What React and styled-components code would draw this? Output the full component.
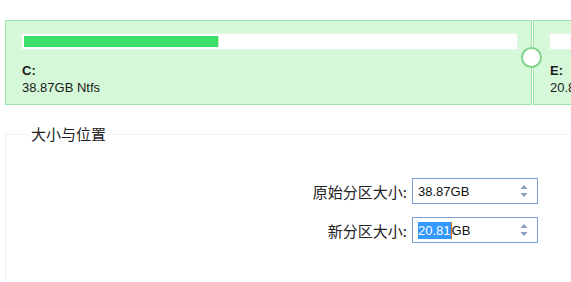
import styled, { createGlobalStyle } from "styled-components";

const GlobalStyle = createGlobalStyle`
  html, body {
    margin: 0;
    padding: 0;
    background: #ffffff;
    overflow: hidden;
  }
  body {
    font-family: "Liberation Sans", "Noto Sans CJK SC", sans-serif;
    font-size: 13px;
    color: #1a1a1a;
  }
`;

const Page = styled.div`
  width: 571px;
  height: 282px;
  overflow: hidden;
`;

const PartitionStrip = styled.div`
  position: relative;
  display: flex;
  gap: 1px;
  padding: 20px 0 0 5px;
  overflow: hidden;
`;

const Partition = styled.div`
  flex: 0 0 ${(p) => p.width}px;
  box-sizing: border-box;
  height: 85px;
  padding: 12px 13px 0 15px;
  background: #d5f8d8;
  border: 1px solid #9fe3a7;
`;

const UsageBar = styled.div`
  box-sizing: border-box;
  height: 17px;
  padding: 2px;
  background: #ffffff;
  border: 1px solid #e3f6e5;
`;

const UsageFill = styled.div`
  height: 100%;
  background: #3ade68;
  box-shadow: 1px 0 0 #c8f2cf;
`;

const DriveLetter = styled.div`
  margin-top: 12px;
  padding-left: 1px;
  font-weight: 700;
  line-height: 17px;
  white-space: nowrap;
`;

const DriveInfo = styled.div`
  padding-left: 1px;
  line-height: 17px;
  white-space: nowrap;
`;

const ResizeHandle = styled.div`
  position: absolute;
  left: 521px;
  top: 47px;
  width: 17px;
  height: 17px;
  border-radius: 50%;
  background: #ffffff;
  border: 2px solid #7fd38b;
`;

const GroupBox = styled.fieldset`
  margin: 19px -20px 0 5px;
  padding: 34px 52px 40px 0;
  border: 1px solid #edf1f8;
  display: flex;
  flex-direction: column;
  align-items: flex-end;
  gap: 13px;
`;

const GroupTitle = styled.legend`
  margin-left: 23px;
  padding: 0 2px;
  font-family: "Noto Sans CJK SC", sans-serif;
  font-size: 15px;
  line-height: 20px;
  color: #222222;
`;

const FieldRow = styled.div`
  display: flex;
  align-items: center;
  gap: 5px;
`;

const FieldLabel = styled.label`
  font-family: "Noto Sans CJK SC", sans-serif;
  font-size: 15px;
  color: #222222;
  white-space: nowrap;
`;

const SpinBox = styled.div`
  box-sizing: border-box;
  width: 126px;
  height: 26px;
  display: flex;
  align-items: center;
  padding: 0 9px 0 5px;
  background: #ffffff;
  border: 1px solid #7d9fd6;
`;

const SpinValue = styled.div`
  flex: 1;
  display: flex;
  align-items: center;
  font-size: 13px;
  line-height: 17px;
  color: #111111;
`;

const Selected = styled.span`
  background: #3399ff;
  color: #ffffff;
`;

const Caret = styled.span`
  width: 1px;
  height: 17px;
  background: #e2761e;
`;

const SpinArrows = styled.svg`
  flex: 0 0 auto;
`;

const Arrows = () => (
  <SpinArrows width="8" height="14" viewBox="0 0 8 14">
    <path d="M4 1 L7.5 5 L0.5 5 Z" fill="#8a9fbd" />
    <path d="M4 13 L7.5 9 L0.5 9 Z" fill="#8a9fbd" />
  </SpinArrows>
);

export default function App() {
  return (
    <Page>
      <GlobalStyle />
      <PartitionStrip>
        <Partition width={527}>
          <UsageBar>
            <UsageFill style={{ width: "39.5%" }} />
          </UsageBar>
          <DriveLetter>C:</DriveLetter>
          <DriveInfo>38.87GB Ntfs</DriveInfo>
        </Partition>
        <Partition width={300}>
          <UsageBar>
            <UsageFill style={{ width: "0%" }} />
          </UsageBar>
          <DriveLetter>E:</DriveLetter>
          <DriveInfo>20.81GB Ntfs</DriveInfo>
        </Partition>
        <ResizeHandle />
      </PartitionStrip>
      <GroupBox>
        <GroupTitle>大小与位置</GroupTitle>
        <FieldRow>
          <FieldLabel>原始分区大小:</FieldLabel>
          <SpinBox>
            <SpinValue>38.87GB</SpinValue>
            <Arrows />
          </SpinBox>
        </FieldRow>
        <FieldRow>
          <FieldLabel>新分区大小:</FieldLabel>
          <SpinBox>
            <SpinValue>
              <Selected>20.81</Selected>
              <Caret />
              GB
            </SpinValue>
            <Arrows />
          </SpinBox>
        </FieldRow>
      </GroupBox>
    </Page>
  );
}
